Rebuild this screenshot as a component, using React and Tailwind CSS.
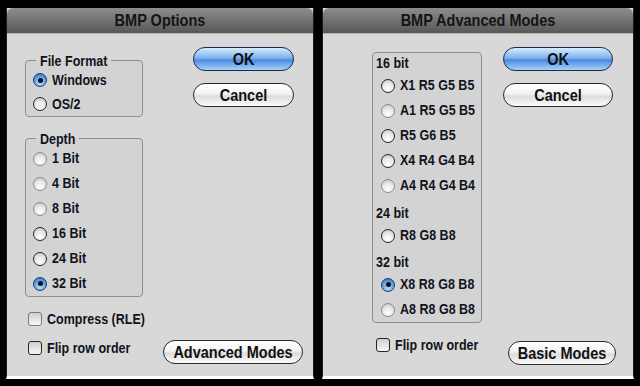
const FONT = "font-['Liberation_Sans',Arial,sans-serif]";

function Radio({ checked, dim }) {
  if (checked) {
    return (
      <span className="w-[14px] h-[14px] shrink-0 rounded-full border-[1.5px] border-[#163a74] bg-[radial-gradient(circle_at_50%_75%,#b9dcfb,#5c9ae6_60%,#2f6cc4)] flex items-center justify-center">
        <span className="w-[5px] h-[5px] rounded-full bg-[#111]" />
      </span>
    );
  }
  return (
    <span
      className={`w-[14px] h-[14px] shrink-0 rounded-full border-[1.5px] bg-[radial-gradient(circle_at_50%_75%,#ffffff,#e6e6e6_55%,#b8b8b8)] ${
        dim ? 'border-[#8c8c8c]' : 'border-[#262626]'
      }`}
    />
  );
}

function Check({ dim }) {
  return (
    <span
      className={`w-[14px] h-[14px] shrink-0 rounded-[3px] border-[1.5px] bg-[linear-gradient(to_bottom,#cfcfcf,#f7f7f7)] ${
        dim ? 'border-[#7a7a7a]' : 'border-[#262626]'
      }`}
    />
  );
}

function Label({ children }) {
  return (
    <span className="inline-block scale-y-[1.15] whitespace-nowrap text-[12.5px] font-bold text-[#10131c] leading-none">
      {children}
    </span>
  );
}

function RadioRow({ label, checked, dim, pad = 'pl-[7px]', h = 'h-[25px]' }) {
  return (
    <div className={`${h} flex items-center gap-[5px] ${pad}`}>
      <Radio checked={checked} dim={dim} />
      <Label>{label}</Label>
    </div>
  );
}

function PillButton({ children, primary, className = '' }) {
  return (
    <button
      className={`h-[24px] rounded-full border-[1.5px] text-[14.5px] font-bold text-[#111] leading-none whitespace-nowrap flex items-center justify-center ${
        primary
          ? 'border-[#1b2b4a] bg-[linear-gradient(to_bottom,#d6ecfd,#7db3ee_45%,#4c8be0_55%,#a6d2fb)]'
          : 'border-[#2a2a2a] bg-[linear-gradient(to_bottom,#ffffff,#f2f2f2_45%,#dcdcdc_55%,#fbfbfb)]'
      } ${className}`}
    >
      <span className="inline-block scale-y-[1.2]">{children}</span>
    </button>
  );
}

function TitleBar({ title }) {
  return (
    <div className="h-[26px] rounded-t-[6px] bg-[linear-gradient(to_bottom,#8d8d8d,#575757)] border-b border-[#b5b5b5] flex items-center justify-center">
      <span className="inline-block scale-y-[1.2] text-[14.5px] font-bold text-[#141414] leading-none">{title}</span>
    </div>
  );
}

function Group({ legend, children, className = '' }) {
  return (
    <fieldset className={`w-[118px] rounded-[4px] border border-[#8e8e8e] bg-[#d3d3d3] ${className}`}>
      <legend className="ml-[10px] px-[4px] leading-[16px]">
        <Label>{legend}</Label>
      </legend>
      {children}
    </fieldset>
  );
}

function BmpOptions() {
  return (
    <div className="w-[308px] h-[371px] flex flex-col border-x border-[#1c1c1c] border-b-[3px] border-b-white bg-[#d8d8d8]">
      <TitleBar title="BMP Options" />
      <div className="flex-1 pl-[18px] pr-[10px]">
        <div className="flex">
          <div className="flex flex-col">
            <Group legend="File Format" className="mt-[18px]">
              <RadioRow label="Windows" checked h="h-[24px]" />
              <RadioRow label="OS/2" h="h-[24px]" />
            </Group>
            <Group legend="Depth" className="mt-[13px]">
              <RadioRow label="1 Bit" dim />
              <RadioRow label="4 Bit" dim />
              <RadioRow label="8 Bit" dim />
              <RadioRow label="16 Bit" />
              <RadioRow label="24 Bit" />
              <RadioRow label="32 Bit" checked />
            </Group>
          </div>
          <div className="ml-auto mr-[9px] mt-[13px] flex flex-col gap-[12px]">
            <PillButton primary className="w-[101px]">OK</PillButton>
            <PillButton className="w-[101px]">Cancel</PillButton>
          </div>
        </div>
        <div className="mt-[12px] h-[20px] pl-[3px] flex items-center gap-[5px]">
          <Check dim />
          <Label>Compress (RLE)</Label>
        </div>
        <div className="mt-[11px] h-[24px] flex items-end justify-between">
          <div className="mb-[6px] h-[20px] pl-[3px] flex items-center gap-[5px]">
            <Check />
            <Label>Flip row order</Label>
          </div>
          <PillButton className="w-[140px]">Advanced Modes</PillButton>
        </div>
      </div>
    </div>
  );
}

function SectionLabel({ children, className = '' }) {
  return (
    <div className={`pl-[3px] flex items-center ${className}`}>
      <Label>{children}</Label>
    </div>
  );
}

function BmpAdvanced() {
  return (
    <div className="w-[312px] h-[371px] flex flex-col border-x border-[#1c1c1c] border-b-[3px] border-b-white bg-[#d8d8d8]">
      <TitleBar title="BMP Advanced Modes" />
      <div className="flex-1 pl-[49px] pr-[17px]">
        <div className="flex">
          <div className="w-[110px] mt-[18px] rounded-[4px] border border-[#8e8e8e] bg-[#d3d3d3] flex flex-col">
            <SectionLabel className="h-[20px]">16 bit</SectionLabel>
            <RadioRow label="X1 R5 G5 B5" pad="pl-[8px]" />
            <RadioRow label="A1 R5 G5 B5" dim pad="pl-[8px]" />
            <RadioRow label="R5 G6 B5" pad="pl-[8px]" />
            <RadioRow label="X4 R4 G4 B4" pad="pl-[8px]" />
            <RadioRow label="A4 R4 G4 B4" dim pad="pl-[8px]" />
            <SectionLabel className="mt-[6px] h-[19px]">24 bit</SectionLabel>
            <RadioRow label="R8 G8 B8" pad="pl-[8px]" />
            <SectionLabel className="mt-[5px] h-[19px]">32 bit</SectionLabel>
            <RadioRow label="X8 R8 G8 B8" checked pad="pl-[8px]" />
            <RadioRow label="A8 R8 G8 B8" dim pad="pl-[8px]" />
          </div>
          <div className="ml-auto mr-[3px] mt-[13px] flex flex-col gap-[12px]">
            <PillButton primary className="w-[110px]">OK</PillButton>
            <PillButton className="w-[110px]">Cancel</PillButton>
          </div>
        </div>
        <div className="mt-[18px] h-[24px] flex items-end justify-between">
          <div className="mb-[10px] h-[20px] pl-[4px] flex items-center gap-[5px]">
            <Check />
            <Label>Flip row order</Label>
          </div>
          <PillButton className="w-[108px]">Basic Modes</PillButton>
        </div>
      </div>
    </div>
  );
}

export default function App() {
  return (
    <div className={`w-[640px] h-[386px] bg-black flex gap-[8px] pl-[6px] pt-[8px] ${FONT}`}>
      <BmpOptions />
      <BmpAdvanced />
    </div>
  );
}
